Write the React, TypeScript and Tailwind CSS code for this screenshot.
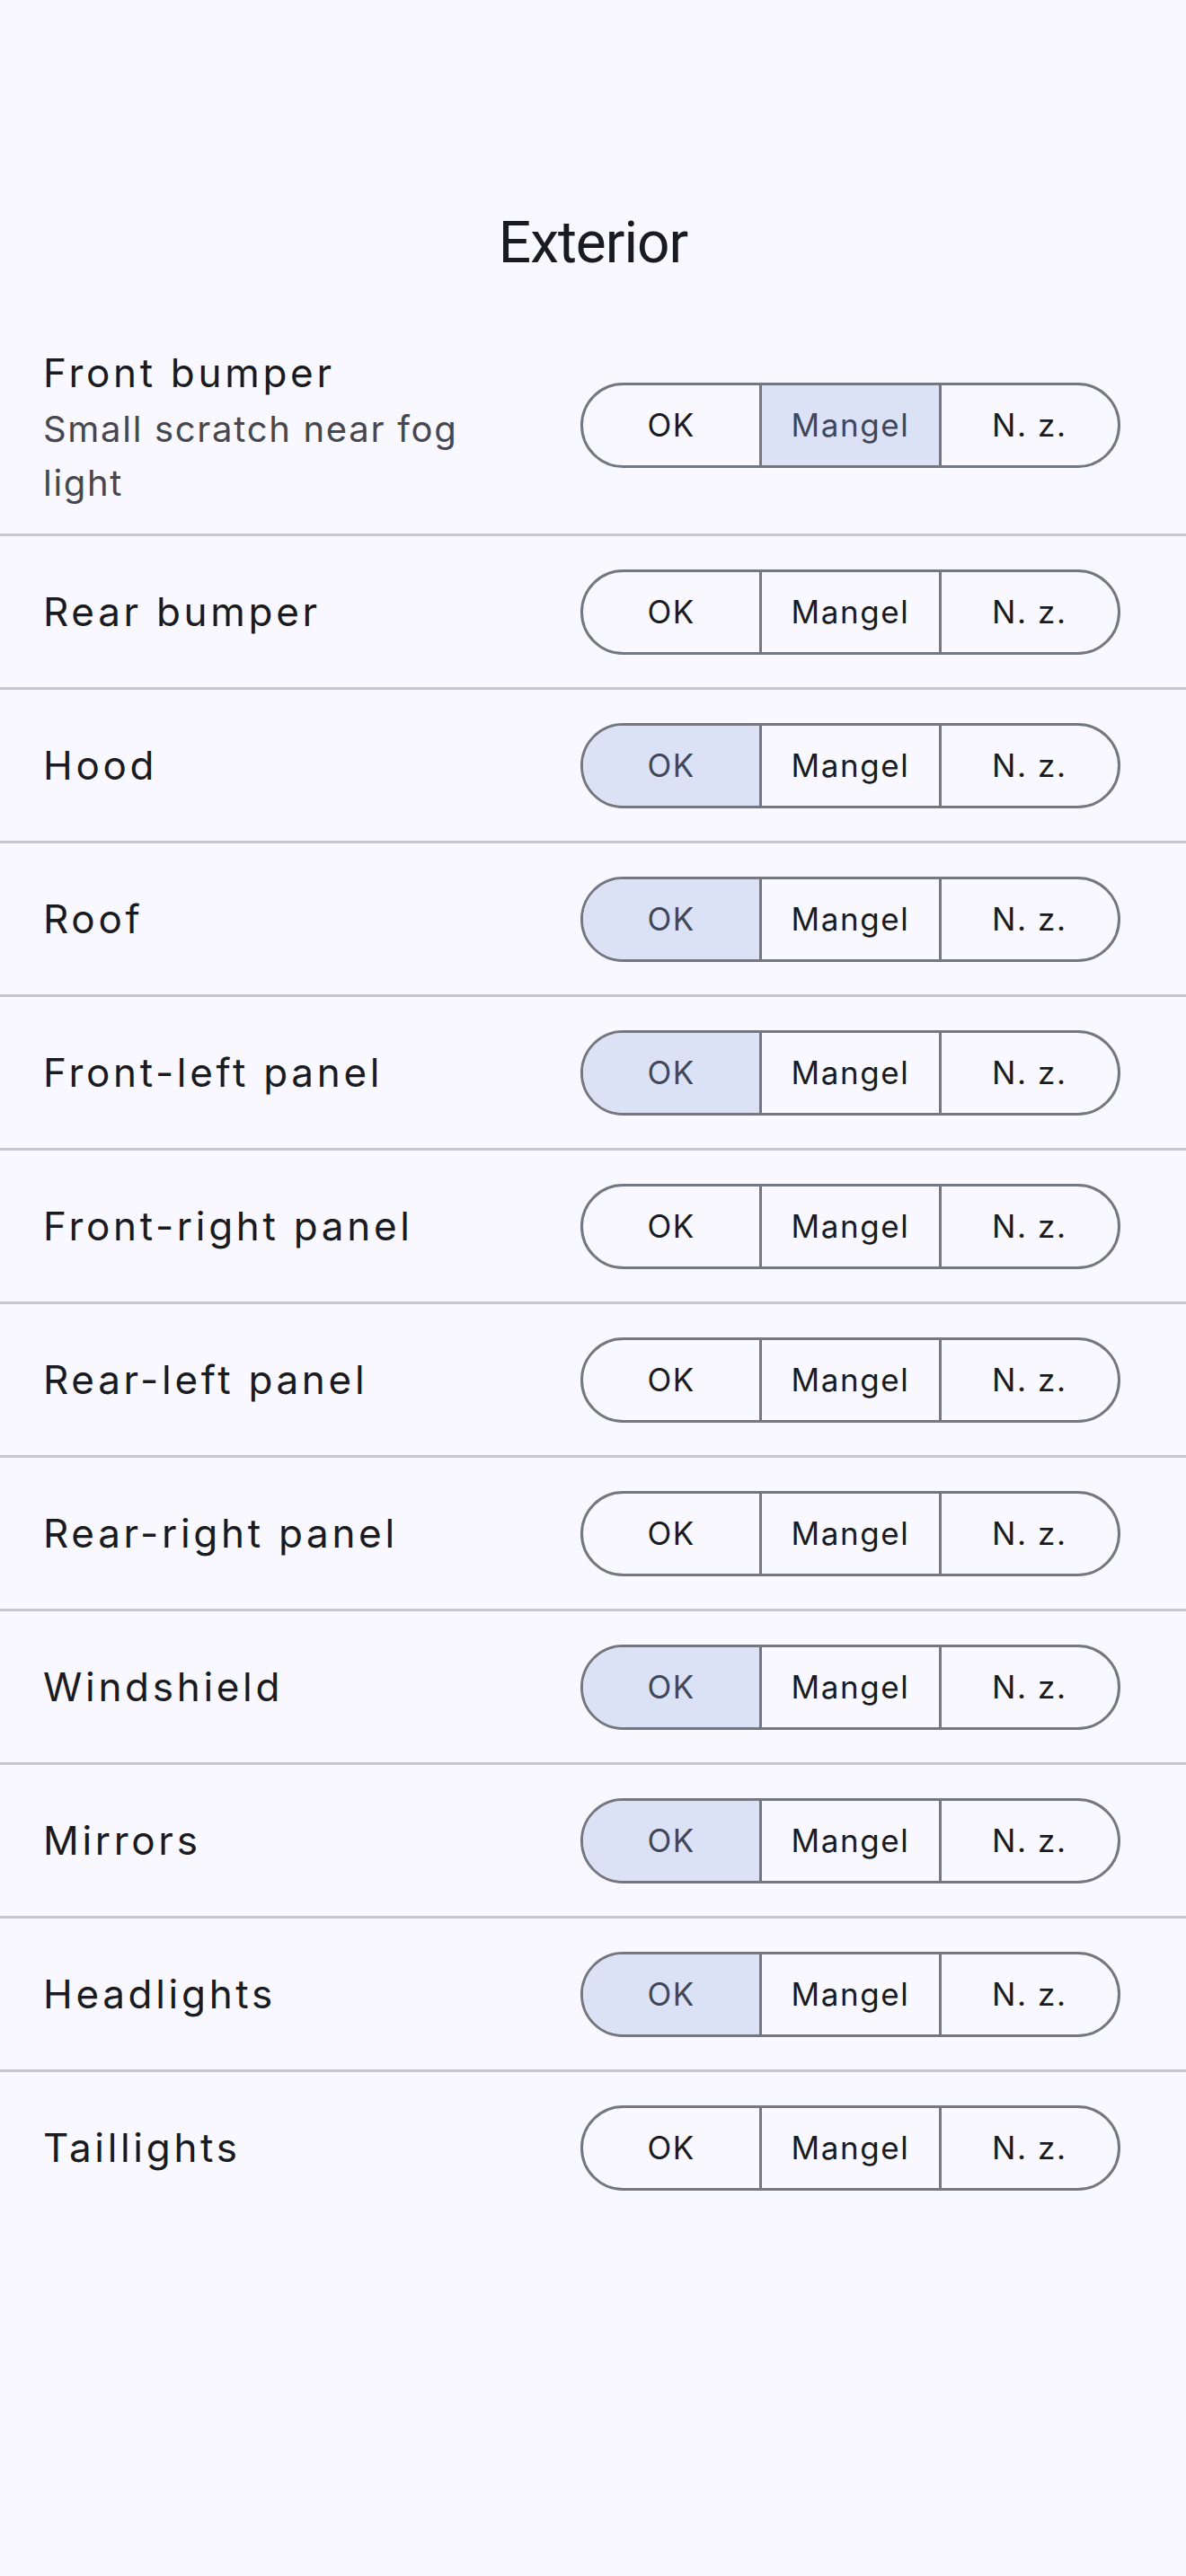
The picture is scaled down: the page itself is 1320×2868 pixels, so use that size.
import { useState } from "react";

type Status = "ok" | "mangel" | "nz" | null;

const initialItems: { name: string; note?: string; status: Status }[] = [
  { name: "Front bumper", note: "Small scratch near fog light", status: "mangel" },
  { name: "Rear bumper", status: null },
  { name: "Hood", status: "ok" },
  { name: "Roof", status: "ok" },
  { name: "Front-left panel", status: "ok" },
  { name: "Front-right panel", status: null },
  { name: "Rear-left panel", status: null },
  { name: "Rear-right panel", status: null },
  { name: "Windshield", status: "ok" },
  { name: "Mirrors", status: "ok" },
  { name: "Headlights", status: "ok" },
  { name: "Taillights", status: null },
];

const segments: { key: Status; label: string }[] = [
  { key: "ok", label: "OK" },
  { key: "mangel", label: "Mangel" },
  { key: "nz", label: "N. z." },
];

const roboto = { fontFamily: 'Roboto, "Noto Sans", "Liberation Sans", sans-serif' };
const inter = { fontFamily: 'Inter, Roboto, "Liberation Sans", sans-serif' };

const Segmented = ({
  value,
  onChange,
}: {
  value: Status;
  onChange: (v: Status) => void;
}) => (
  <div className="flex w-[601px] h-[95px] shrink-0 rounded-full border-[3px] border-[#74777F] overflow-hidden">
    {segments.map((s, i) => {
      const active = value === s.key;
      return (
        <button
          key={s.label}
          onClick={() => onChange(active ? null : s.key)}
          style={inter}
          className={
            "flex-1 flex items-center justify-center text-[35px] tracking-[1.6px] " +
            (i > 0 ? "border-l-[3px] border-[#74777F] " : "") +
            (active ? "bg-[#DCE2F6] text-[#3F4759]" : "bg-transparent text-[#1A1B20]")
          }
        >
          {s.label}
        </button>
      );
    })}
  </div>
);

export default function App() {
  const [items, setItems] = useState(initialItems);

  const setStatus = (index: number, status: Status) => {
    setItems((prev) => prev.map((it, i) => (i === index ? { ...it, status } : it)));
  };

  return (
    <div className="w-full min-h-[2868px] bg-[#F9F8FE]" style={inter}>
      <div className="pt-[229px] pb-[40px]">
        <h1
          className="text-center text-[64px] leading-[84px] tracking-[-1px] text-[#1A1B20]"
          style={roboto}
        >
          Exterior
        </h1>
      </div>

      {items.map((item, index) => (
        <div key={item.name}>
          {index > 0 && <div className="h-[3px] bg-[#C5C6CF]" />}
          {item.note ? (
            <div className="flex items-start h-[241px] pl-[48px] pr-[73px]">
              <div className="flex-1 pt-[32px]">
                <div className="text-[44px] leading-[60px] tracking-[3.7px] text-[#1A1B20]">
                  {item.name}
                </div>
                <div className="mt-[3px] text-[40px] leading-[60px] tracking-[1.7px] text-[#46474F]">
                  {item.note}
                </div>
              </div>
              <div className="self-center ml-[48px]">
                <Segmented value={item.status} onChange={(v) => setStatus(index, v)} />
              </div>
            </div>
          ) : (
            <div className="flex items-center h-[168px] pl-[48px] pr-[73px]">
              <div className="flex-1 text-[44px] leading-[60px] tracking-[3.7px] text-[#1A1B20]">
                {item.name}
              </div>
              <div className="ml-[48px]">
                <Segmented value={item.status} onChange={(v) => setStatus(index, v)} />
              </div>
            </div>
          )}
        </div>
      ))}
    </div>
  );
}
